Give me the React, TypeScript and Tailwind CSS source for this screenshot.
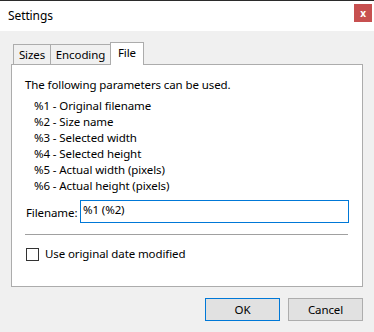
import React from "react";

export default function App() {
  const params = [
    "%1 - Original filename",
    "%2 - Size name",
    "%3 - Selected width",
    "%4 - Selected height",
    "%5 - Actual width (pixels)",
    "%6 - Actual height (pixels)",
  ];
  return (
    <div
      className="w-[374px] h-[332px] bg-[#f0f0f0] flex flex-col text-[11.5px] tracking-[-0.1px] text-black overflow-hidden"
      style={{ fontFamily: '"Noto Sans", "Open Sans", sans-serif' }}
    >
      {/* top dark line */}
      <div className="h-[1px] bg-[#2b2b2b]" />
      {/* title bar */}
      <div className="h-[30px] bg-white flex items-center justify-between pl-[8px] pr-[2px]">
        <span className="text-[12px] leading-[16px] -mt-[1px]">Settings</span>
        <div className="w-[18px] h-[18px] bg-[#c75050] flex items-center justify-center -mt-[6px]">
          <span className="text-white text-[10px] font-bold leading-none -mt-[1px]">x</span>
        </div>
      </div>
      {/* body */}
      <div className="flex flex-col px-[11px] pt-[11px]">
        {/* tabs */}
        <div className="flex items-end h-[22px] pl-[2px] relative z-10">
          <div className="h-[20px] w-[38px] border border-b-0 border-[#acacac] bg-[#f0f0f0] flex items-center justify-center leading-[16px]">
            Sizes
          </div>
          <div className="h-[20px] w-[61px] -ml-px border border-b-0 border-[#acacac] bg-[#f0f0f0] flex items-center justify-center leading-[16px]">
            Encoding
          </div>
          <div className="h-[23px] w-[34px] -ml-px -mb-px border border-b-0 border-[#acacac] bg-white flex items-center justify-center leading-[16px] pb-[2px]">
            File
          </div>
        </div>
        {/* panel */}
        <div className="h-[223px] border border-[#acacac] bg-white flex flex-col pl-[13px] pr-[12px] pt-[12px]">
          <div className="leading-[16px]">The following parameters can be used.</div>
          <div className="flex flex-col pl-[9px] mt-[5px]">
            {params.map((p) => (
              <div key={p} className="leading-[16px]">
                {p}
              </div>
            ))}
          </div>
          <div className="flex items-center mt-[6px] pl-[1px]">
            <span className="w-[54px] leading-[16px] mt-[2px]">Filename:</span>
            <div className="w-[269px] h-[23px] border border-[#0078d7] flex items-start pl-[2px]">
              <span className="leading-[16px] mt-[1px]">%1 (%2)</span>
            </div>
          </div>
          <div className="h-px bg-[#a0a0a0] mt-[11px] w-[323px]" />
          <div className="flex items-center mt-[11px] pl-[1px]">
            <div className="w-[13px] h-[13px] border border-[#333333] bg-white" />
            <span className="ml-[6px] leading-[16px]">Use original date modified</span>
          </div>
        </div>
        {/* buttons */}
        <div className="flex justify-end gap-[8px] mt-[11px]">
          <div className="w-[75px] h-[23px] border border-[#0078d7] bg-[#e1e1e1] flex items-center justify-center leading-[16px]">
            OK
          </div>
          <div className="w-[75px] h-[23px] border border-[#adadad] bg-[#e1e1e1] flex items-center justify-center leading-[16px]">
            Cancel
          </div>
        </div>
      </div>
    </div>
  );
}
